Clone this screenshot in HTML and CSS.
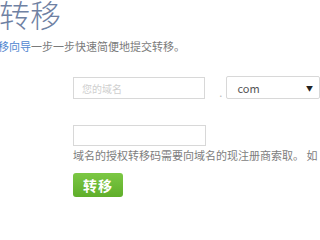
FILE: index.html
```html
<!DOCTYPE html>
<html lang="zh-CN">
<head>
<meta charset="utf-8">
<link rel="stylesheet" href="styles.css">
</head>
<body>
<div class="page">
  <h1 class="title">转移</h1>
  <p class="intro"><span class="link">移向导</span>一步一步快速简便地提交转移。</p>
  <div class="form">
    <div class="label"></div>
    <div class="field row1">
      <div class="input"><span class="ph">您的域名</span></div>
      <span class="dot">.</span>
      <div class="select"><span class="opt">com</span><span class="arrow">▼</span></div>
    </div>
    <div class="label lbl2"><span>授权码：</span></div>
    <div class="field row2">
      <div class="input input2"></div>
      <p class="help">域名的授权转移码需要向域名的现注册商索取。 如</p>
      <div class="btn">转移</div>
    </div>
  </div>
</div>
</body>
</html>
```

FILE: styles.css
```css
html, body {
  margin: 0;
  padding: 0;
  background: #ffffff;
}
.page {
  width: 320px;
  height: 200px;
  overflow: hidden;
  font-family: "Noto Sans CJK SC", "Noto Sans", sans-serif;
}
.title {
  margin: -5px 0 0 -1px;
  font-size: 31px;
  line-height: 38px;
  font-weight: 300;
  color: #6f81a3;
  white-space: nowrap;
}
.intro {
  margin: 5px 0 0 -2px;
  font-size: 11px;
  line-height: 16px;
  color: #7a7a7a;
  white-space: nowrap;
}
.link {
  color: #4f86d0;
}
.form {
  display: grid;
  grid-template-columns: 73px 247px;
  margin-top: 22px;
}
.label {
  position: relative;
  overflow: visible;
}
.lbl2 span {
  display: block;
  text-align: right;
  margin-right: 67px;
  margin-left: -60px;
  margin-top: 14px;
  font-size: 11px;
  color: #d4d4d4;
  white-space: nowrap;
}
.field.row1 {
  display: flex;
  align-items: flex-end;
  height: 23px;
}
.input {
  box-sizing: border-box;
  width: 134px;
  height: 22px;
  border: 1px solid #d8d8d8;
  display: flex;
  align-items: center;
  padding-left: 8px;
}
.ph {
  font-size: 10px;
  color: #cfcfcf;
}
.dot {
  box-sizing: border-box;
  width: 22px;
  text-align: right;
  padding-right: 4px;
  font-size: 11px;
  line-height: 14px;
  color: #bbbbbb;
}
.select {
  box-sizing: border-box;
  width: 95px;
  height: 23px;
  border: 1px solid #d8d8d8;
  border-radius: 2px;
  display: flex;
  align-items: center;
  justify-content: space-between;
  padding: 0 6px 0 10px;
}
.opt {
  font-size: 11px;
  color: #555555;
}
.arrow {
  font-size: 7px;
  color: #222222;
}
.field.row2 {
  padding-top: 26px;
  display: flex;
  flex-direction: column;
  align-items: flex-start;
}
.input2 {
  width: 133px;
  height: 21px;
}
.help {
  margin: 2px 0 0 0;
  font-size: 11px;
  line-height: 15px;
  color: #7d7d7d;
  white-space: nowrap;
}
.btn {
  margin-top: 10px;
  width: 50px;
  height: 24px;
  border-radius: 3px;
  background: linear-gradient(#7cc844, #5fae2a);
  color: #ffffff;
  font-size: 14px;
  font-weight: bold;
  line-height: 24px;
  text-align: center;
  letter-spacing: 1px;
}
```
